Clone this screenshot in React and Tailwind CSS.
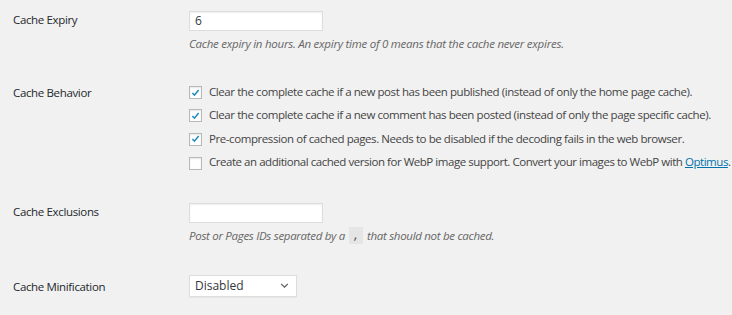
import React from "react";

const font = { fontFamily: '"Open Sans", "Noto Sans", sans-serif' };

const Check = ({ checked }) => (
  <span className="relative inline-flex h-[13px] w-[13px] shrink-0 items-center justify-center border border-[#b4b9be] bg-white shadow-[inset_0_1px_2px_rgba(0,0,0,0.1)]">
    {checked && (
      <svg viewBox="0 0 20 20" className="h-[16px] w-[16px] text-[#1e8cbe]">
        <path d="M4.3 10l3.8 4 7.6-9.6" fill="none" stroke="currentColor" strokeWidth="2.8" />
      </svg>
    )}
  </span>
);

const options = [
  { checked: true, text: "Clear the complete cache if a new post has been published (instead of only the home page cache)." },
  { checked: true, text: "Clear the complete cache if a new comment has been posted (instead of only the page specific cache)." },
  { checked: true, text: "Pre-compression of cached pages. Needs to be disabled if the decoding fails in the web browser." },
];

export default function App() {
  return (
    <div style={font} className="h-[315px] w-[732px] overflow-hidden bg-[#f1f1f1] text-[11.5px] leading-[20px] tracking-[-0.35px]">
      {/* Cache Expiry */}
      <div className="flex pt-[9px]">
        <div className="mt-[1px] w-[189px] shrink-0 pl-[13px] text-[#23282d]">Cache Expiry</div>
        <div>
          <input
            readOnly
            value="6"
            className="mt-[2px] block h-[20px] w-[134px] border border-[#ddd] bg-white px-[5px] text-[12px] text-[#32373c] shadow-[inset_0_1px_2px_rgba(0,0,0,0.07)] outline-none"
          />
          <p className="mt-[3px] italic tracking-[-0.25px] text-[#666]">
            Cache expiry in hours. An expiry time of 0 means that the cache never expires.
          </p>
        </div>
      </div>

      {/* Cache Behavior */}
      <div className="flex pt-[28px]">
        <div className="mt-[1px] w-[189px] shrink-0 pl-[13px] text-[#23282d]">Cache Behavior</div>
        <div className="flex flex-col tracking-[-0.42px] text-[#444]">
          {options.map((o) => (
            <label key={o.text} className="flex h-[23.4px] items-start gap-[7px] whitespace-nowrap">
              <span className="mt-[4px]">
                <Check checked={o.checked} />
              </span>
              <span>{o.text}</span>
            </label>
          ))}
          <label className="flex h-[23.4px] items-start gap-[7px] whitespace-nowrap tracking-[-0.46px]">
            <span className="mt-[4px]">
              <Check checked={false} />
            </span>
            <span>
              Create an additional cached version for WebP image support. Convert your images to WebP with{" "}
              <a className="text-[#0073aa] underline">Optimus</a>.
            </span>
          </label>
        </div>
      </div>

      {/* Cache Exclusions */}
      <div className="flex pt-[25px]">
        <div className="mt-[1px] w-[189px] shrink-0 pl-[13px] text-[#23282d]">Cache Exclusions</div>
        <div>
          <input
            readOnly
            value=""
            className="mt-[2px] block h-[20px] w-[134px] border border-[#ddd] bg-white px-[5px] shadow-[inset_0_1px_2px_rgba(0,0,0,0.07)] outline-none"
          />
          <p className="mt-[3px] flex items-center italic tracking-[-0.3px] text-[#666]">
            <span>Post or Pages IDs separated by a</span>
            <code className="mx-[4px] inline-flex h-[17px] w-[14px] items-center justify-center bg-[#e5e5e5] text-[11px] not-italic text-[#444]">,</code>
            <span>that should not be cached.</span>
          </p>
        </div>
      </div>

      {/* Cache Minification */}
      <div className="flex pt-[29px]">
        <div className="mt-[2px] w-[189px] shrink-0 pl-[13px] text-[#23282d]">Cache Minification</div>
        <div className="flex h-[22px] w-[108px] items-center justify-between border border-[#ddd] bg-white pl-[5px] pr-[7px] text-[12px] tracking-normal text-[#32373c] shadow-[0_1px_1px_rgba(0,0,0,0.04)]">
          <span>Disabled</span>
          <svg viewBox="0 0 10 6" className="h-[5px] w-[9px] text-[#555]">
            <path d="M1 1l4 4 4-4" fill="none" stroke="currentColor" strokeWidth="1.3" />
          </svg>
        </div>
      </div>
    </div>
  );
}
